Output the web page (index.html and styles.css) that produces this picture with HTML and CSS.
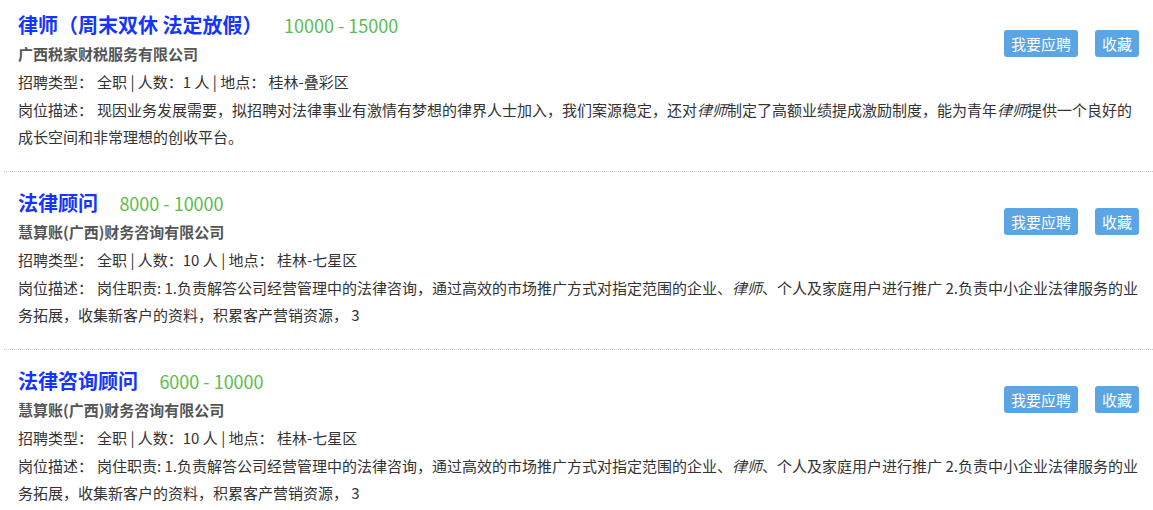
FILE: index.html
```html
<!DOCTYPE html>
<html lang="zh-CN">
  <head>
    <meta charset="UTF-8" />
    <meta name="viewport" content="width=device-width, initial-scale=1.0" />
    <title>职位列表</title>
    <link rel="stylesheet" href="styles.css">
  </head>
  <body>
    <div class="job-list">
      <div class="job-item">
        <div class="job-btns">
          <a class="btn" href="#">我要应聘</a>
          <a class="btn" href="#">收藏</a>
        </div>
        <div class="job-title">
          <a href="#">律师（周末双休 法定放假）</a>
          <span class="salary">10000 - 15000</span>
        </div>
        <div class="company">广西税家财税服务有限公司</div>
        <div class="info"><span class="label">招聘类型：</span>全职 | 人数：1 人 | 地点：&nbsp;桂林-叠彩区</div>
        <div class="desc"><span class="label">岗位描述：</span>现因业务发展需要，拟招聘对法律事业有激情有梦想的律界人士加入，我们案源稳定，还对<em>律师</em>制定了高额业绩提成激励制度，能为青年<em>律师</em>提供一个良好的成长空间和非常理想的创收平台。</div>
      </div>

      <div class="job-item">
        <div class="job-btns">
          <a class="btn" href="#">我要应聘</a>
          <a class="btn" href="#">收藏</a>
        </div>
        <div class="job-title">
          <a href="#">法律顾问</a>
          <span class="salary">8000 - 10000</span>
        </div>
        <div class="company">慧算账(广西)财务咨询有限公司</div>
        <div class="info"><span class="label">招聘类型：</span>全职 | 人数：10 人 | 地点：&nbsp;桂林-七星区</div>
        <div class="desc"><span class="label">岗位描述：</span>岗住职责: 1.负责解答公司经营管理中的法律咨询，通过高效的市场推广方式对指定范围的企业、<em>律师</em>、个人及家庭用户进行推广 2.负责中小企业法律服务的业务拓展，收集新客户的资料，积累客产营销资源， 3</div>
      </div>

      <div class="job-item">
        <div class="job-btns">
          <a class="btn" href="#">我要应聘</a>
          <a class="btn" href="#">收藏</a>
        </div>
        <div class="job-title">
          <a href="#">法律咨询顾问</a>
          <span class="salary">6000 - 10000</span>
        </div>
        <div class="company">慧算账(广西)财务咨询有限公司</div>
        <div class="info"><span class="label">招聘类型：</span>全职 | 人数：10 人 | 地点：&nbsp;桂林-七星区</div>
        <div class="desc"><span class="label">岗位描述：</span>岗住职责: 1.负责解答公司经营管理中的法律咨询，通过高效的市场推广方式对指定范围的企业、<em>律师</em>、个人及家庭用户进行推广 2.负责中小企业法律服务的业务拓展，收集新客户的资料，积累客产营销资源， 3</div>
      </div>
    </div>
  </body>
</html>
```

FILE: styles.css
```css
* {
  margin: 0;
  padding: 0;
  box-sizing: border-box;
}
body {
  background: #fff;
  color: #333;
  font-family: "Noto Sans CJK SC", "Noto Sans", sans-serif;
  font-size: 15px;
  overflow: hidden;
}
a {
  text-decoration: none;
}

.job-list {
  margin-left: 4px;
}
.job-item {
  padding: 15px 14px 20px 14px;
  border-bottom: 1px dotted #c8c8c8;
}
.job-item:first-child {
  padding-top: 9px;
}

/* 右侧按钮 */
.job-btns {
  float: right;
  display: flex;
  gap: 17px;
  margin-top: 21px;
}
.btn {
  display: block;
  height: 27px;
  line-height: 27px;
  padding: 0 7px;
  background: #5ba5e4;
  color: #fff;
  font-size: 15px;
  border-radius: 3px;
}

.job-title {
  height: 31px;
  line-height: 31px;
}
.job-title a {
  color: #1535ff;
  font-size: 20px;
  font-weight: bold;
}
.salary {
  margin-left: 18px;
  color: #5dbb4d;
  font-size: 18px;
}

.company {
  line-height: 27.75px;
  color: #555;
  font-weight: bold;
}
.info,
.desc {
  line-height: 27.75px;
}
.label {
  margin-right: 4px;
}
.desc em {
  font-style: italic;
}
```
